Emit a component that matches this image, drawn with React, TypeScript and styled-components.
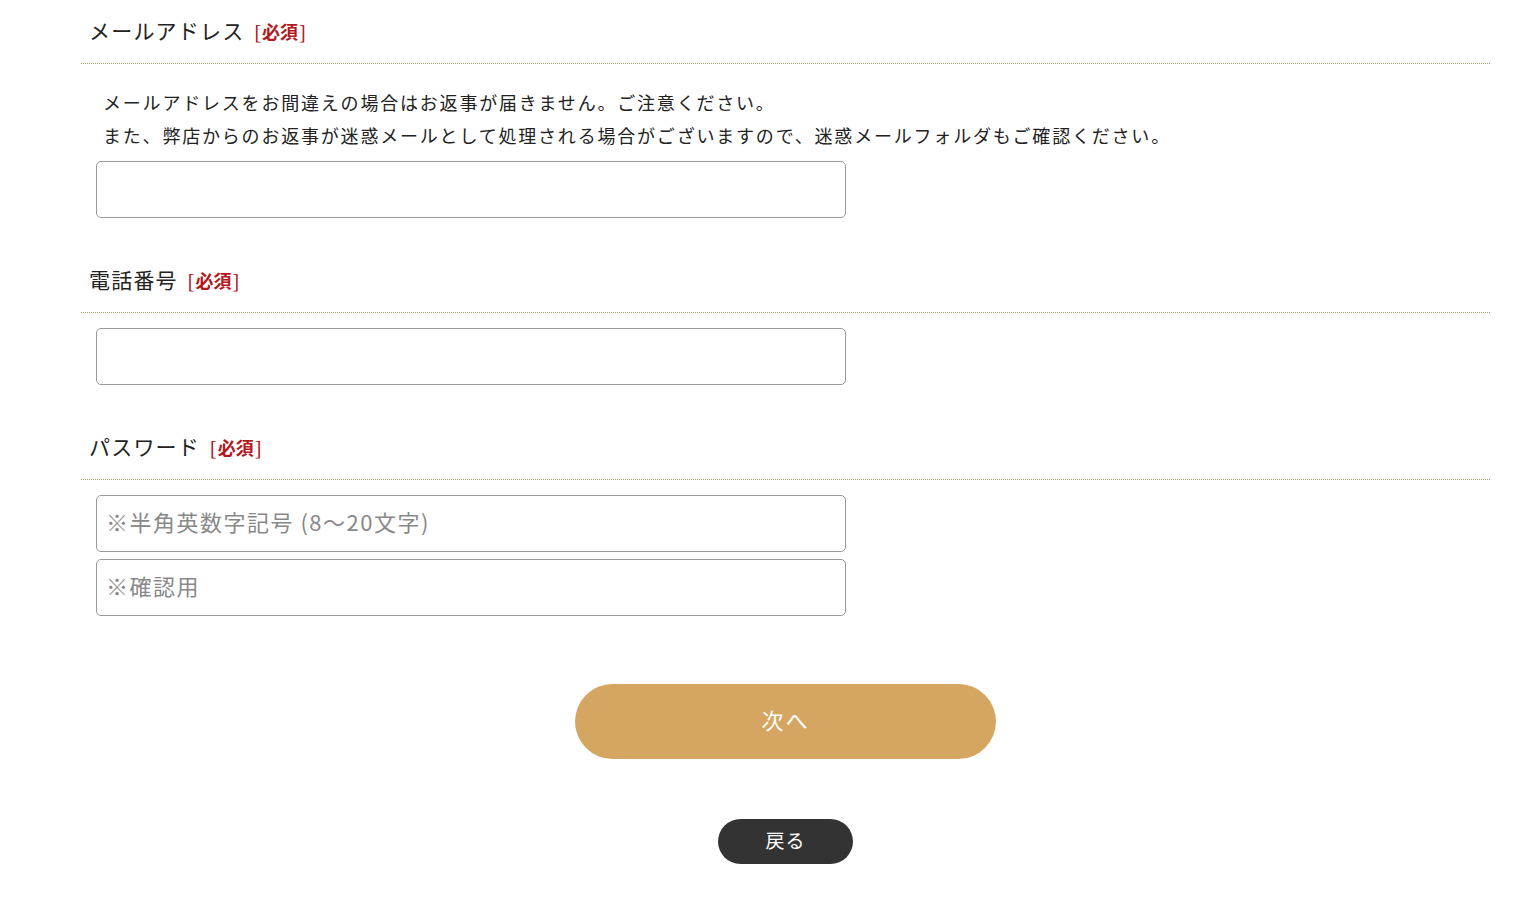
import React from 'react';
import styled, { createGlobalStyle } from 'styled-components';

const GlobalStyle = createGlobalStyle`
    html, body {
        margin: 0;
        padding: 0;
        background: #fff;
        font-family: "Noto Sans CJK JP", "Noto Sans", sans-serif;
        color: #222;
    }
`;

const Page = styled.div`
    padding: 0 49px 0 81px;
`;

const Form = styled.form`
    width: 1409px;
    display: flex;
    flex-direction: column;
`;

const Section = styled.section<{ $first?: boolean }>`
    margin-top: ${p => (p.$first ? '16px' : '47px')};
`;

const LabelRow = styled.div`
    display: flex;
    align-items: center;
    gap: 9px;
    padding: 0 8px 17px;
    height: 30px;
    border-bottom: 1px dotted #b39560;
`;

const Label = styled.span`
    font-size: 21px;
    letter-spacing: 1.2px;
    line-height: 30px;
    color: #222;
    padding-bottom: 2px;
`;

const Required = styled.span`
    font-size: 18px;
    font-weight: bold;
    color: #b3181e;
    line-height: 30px;
`;

const Bracket = styled.span`
    font-family: "Liberation Serif", serif;
    font-weight: normal;
    font-size: 20px;
    margin: 0 1px;
`;

const Body = styled.div`
    padding: 15px 0 0 15px;
    display: flex;
    flex-direction: column;
    gap: 7px;
`;

const Note = styled.p`
    margin: 7px 0 2px 7px;
    font-size: 18px;
    letter-spacing: 1.8px;
    line-height: 33px;
    color: #222;
`;

const Input = styled.input`
    box-sizing: border-box;
    width: 750px;
    height: 57px;
    border: 1px solid #999;
    border-radius: 5px;
    padding: 0 9px 5px;
    font-family: "Noto Sans CJK JP", "Noto Sans", sans-serif;
    font-size: 22px;
    letter-spacing: 1.5px;
    color: #222;
    outline: none;
    &::placeholder {
        color: #888;
    }
`;

const Actions = styled.div`
    display: flex;
    flex-direction: column;
    align-items: center;
    margin-top: 68px;
    gap: 60px;
    padding-bottom: 49px;
`;

const NextButton = styled.button`
    width: 421px;
    height: 75px;
    border: none;
    border-radius: 38px;
    background: #d4a661;
    color: #fff;
    font-family: "Noto Sans CJK JP", "Noto Sans", sans-serif;
    font-size: 22px;
    letter-spacing: 2px;
    padding: 0 0 6px;
    cursor: pointer;
`;

const BackButton = styled.button`
    width: 135px;
    height: 45px;
    border: none;
    border-radius: 23px;
    background: #333;
    color: #fff;
    font-family: "Noto Sans CJK JP", "Noto Sans", sans-serif;
    font-size: 19px;
    letter-spacing: 1px;
    padding: 0 0 4px;
    cursor: pointer;
`;

const Field = ({ label, first, children }: { label: string; first?: boolean; children: React.ReactNode }) => (
    <Section $first={first}>
        <LabelRow>
            <Label>{label}</Label>
            <Required>
                <Bracket>[</Bracket>必須<Bracket>]</Bracket>
            </Required>
        </LabelRow>
        <Body>{children}</Body>
    </Section>
);

const App = () => {
    return (
        <Page>
            <GlobalStyle />
            <Form onSubmit={e => e.preventDefault()}>
                <Field label="メールアドレス" first>
                    <Note>
                        メールアドレスをお間違えの場合はお返事が届きません。ご注意ください。
                        <br />
                        また、弊店からのお返事が迷惑メールとして処理される場合がございますので、迷惑メールフォルダもご確認ください。
                    </Note>
                    <Input type="email" />
                </Field>
                <Field label="電話番号">
                    <Input type="tel" />
                </Field>
                <Field label="パスワード">
                    <Input type="password" placeholder="※半角英数字記号 (8〜20文字)" />
                    <Input type="password" placeholder="※確認用" />
                </Field>
                <Actions>
                    <NextButton type="submit">次へ</NextButton>
                    <BackButton type="button">戻る</BackButton>
                </Actions>
            </Form>
        </Page>
    );
};

export default App;
